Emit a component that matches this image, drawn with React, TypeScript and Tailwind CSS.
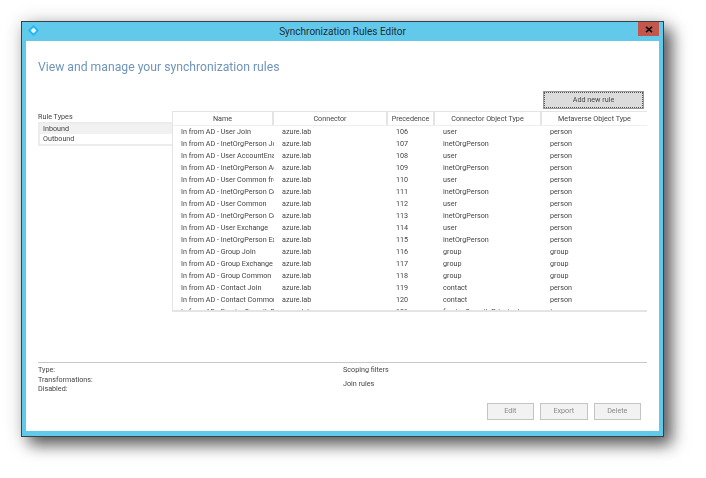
const rules = [
  ['In from AD - User Join', '106', 'user', 'person'],
  ['In from AD - InetOrgPerson Join', '107', 'inetOrgPerson', 'person'],
  ['In from AD - User AccountEnabled', '108', 'user', 'person'],
  ['In from AD - InetOrgPerson AccountEnabled', '109', 'inetOrgPerson', 'person'],
  ['In from AD - User Common from Exchange', '110', 'user', 'person'],
  ['In from AD - InetOrgPerson Common from Exchange', '111', 'inetOrgPerson', 'person'],
  ['In from AD - User Common', '112', 'user', 'person'],
  ['In from AD - InetOrgPerson Common', '113', 'inetOrgPerson', 'person'],
  ['In from AD - User Exchange', '114', 'user', 'person'],
  ['In from AD - InetOrgPerson Exchange', '115', 'inetOrgPerson', 'person'],
  ['In from AD - Group Join', '116', 'group', 'group'],
  ['In from AD - Group Exchange', '117', 'group', 'group'],
  ['In from AD - Group Common', '118', 'group', 'group'],
  ['In from AD - Contact Join', '119', 'contact', 'person'],
  ['In from AD - Contact Common', '120', 'contact', 'person'],
  ['In from AD - ForeignSecurityPrincipal', '121', 'foreignSecurityPrincipal', '*'],
];

const columns = 'grid grid-cols-[101px_114px_47px_107px_1fr]';

function HeaderCell({ children }: { children: string }) {
  return <div className="border-r-2 border-[#e4e4e4] text-center leading-[13px] last:border-r-0">{children}</div>;
}

function Cell({ children }: { children: string }) {
  return <div className="overflow-hidden whitespace-nowrap pl-2 pr-px">{children}</div>;
}

function GreyButton({ children }: { children: string }) {
  return (
    <button type="button" className="h-[17px] w-[47.5px] border border-[#c4c4c4] bg-[#f2f2f2] text-[#8a8a8a]">
      {children}
    </button>
  );
}

export default function App() {
  return (
    <div className="h-[478px] w-[706px] overflow-hidden bg-white pl-[21px] pt-[21px] font-['Roboto',sans-serif] text-[7.2px] text-[#454545]">
      <div className="flex h-[416px] w-[643px] flex-col border border-[#34424a] bg-[#63c9ea] px-1 pb-[5px] shadow-[8px_8px_15px_rgba(0,0,0,0.62),0_0_18px_rgba(0,0,0,0.14)]">
        <div className="relative flex h-[19px] shrink-0 items-center justify-center">
          <svg className="absolute left-[2px] top-[3px]" width="11" height="11" viewBox="0 0 11 11">
            <path d="M5.5 0 11 5.5 5.5 11 0 5.5Z" fill="#1fb5f5" />
            <path d="M5.5 2.5 8.5 5.5 5.5 8.5 2.5 5.5Z" fill="#e6f8ff" />
          </svg>
          <span className="text-[10px] text-[#1d2c33]">Synchronization Rules Editor</span>
          <div className="absolute right-0 top-0 flex h-[14px] w-[21px] items-center justify-center bg-[#c4564b]">
            <svg width="8" height="7" viewBox="0 0 8 7">
              <path d="M1 0.8 7 6.2M7 0.8 1 6.2" stroke="#111" strokeWidth="1.8" />
            </svg>
          </div>
        </div>
        <div className="flex min-h-0 flex-1 flex-col bg-white pl-3 pr-[12px] blur-[0.25px]">
          <h1 className="mt-[17px] text-[12.2px] leading-[18px] text-[#6f95bb]">View and manage your synchronization rules</h1>
          <div className="mt-[16px] flex justify-end pr-[4px]">
            <button
              type="button"
              className="h-[16px] w-[99px] border border-dotted border-[#555] bg-[#dcdcdc] outline outline-1 outline-[#9a9a9a]"
            >
              Add new rule
            </button>
          </div>
          <div className="mt-[3px] flex">
            <div className="w-[134px] shrink-0 pt-[1px]">
              <div className="leading-[9px]">Rule Types</div>
              <div className="mt-px border-2 border-r-0 border-[#ececec] bg-white">
                <div className="h-[10px] bg-[#f1f1f1] pl-[3px] leading-[10px]">Inbound</div>
                <div className="h-[10px] pl-[3px] leading-[10px]">Outbound</div>
              </div>
            </div>
            <div className="h-[201px] flex-1 overflow-hidden border-b-2 border-l border-t border-[#e4e4e4]">
              <div className={`${columns} h-[14px] border-b border-[#eeeeee]`}>
                <HeaderCell>Name</HeaderCell>
                <HeaderCell>Connector</HeaderCell>
                <HeaderCell>Precedence</HeaderCell>
                <HeaderCell>Connector Object Type</HeaderCell>
                <HeaderCell>Metaverse Object Type</HeaderCell>
              </div>
              {rules.map(([name, precedence, objectType, metaverse]) => (
                <div key={precedence} className={`${columns} h-[12px] leading-[12px]`}>
                  <Cell>{name}</Cell>
                  <Cell>azure.lab</Cell>
                  <Cell>{precedence}</Cell>
                  <Cell>{objectType}</Cell>
                  <Cell>{metaverse}</Cell>
                </div>
              ))}
            </div>
          </div>
          <div className="mt-[50px] flex border-t border-[#c8c8c8]">
            <div className="w-[305px] pt-[2px] leading-[9.5px]">
              <div>Type:</div>
              <div>Transformations:</div>
              <div>Disabled:</div>
            </div>
            <div className="leading-[14px]">
              <div>Scoping filters</div>
              <div>Join rules</div>
            </div>
          </div>
          <div className="mt-[9px] flex justify-end gap-[6px] pr-[6px]">
            <GreyButton>Edit</GreyButton>
            <GreyButton>Export</GreyButton>
            <GreyButton>Delete</GreyButton>
          </div>
        </div>
      </div>
    </div>
  );
}
